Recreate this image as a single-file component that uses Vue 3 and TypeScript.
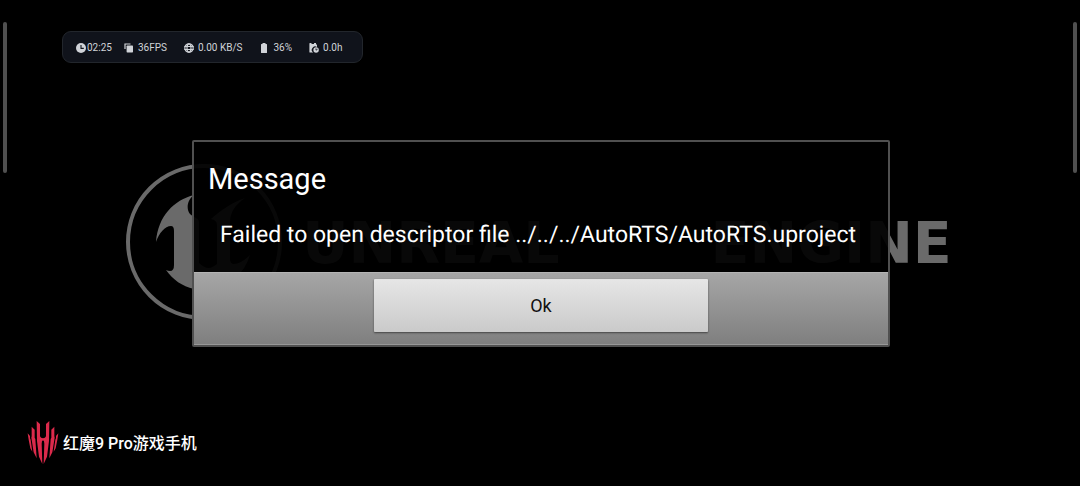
<script setup lang="ts">
import { ref } from 'vue'

type StatIcon = 'clock' | 'frames' | 'globe' | 'battery' | 'usage'

interface Stat {
  icon: StatIcon
  value: string
}

const stats: Stat[] = [
  { icon: 'clock', value: '02:25' },
  { icon: 'frames', value: '36FPS' },
  { icon: 'globe', value: '0.00 KB/S' },
  { icon: 'battery', value: '36%' },
  { icon: 'usage', value: '0.0h' },
]

const open = ref(true)
</script>

<template>
  <main class="screen">
    <div class="splash">
      <svg class="emblem" viewBox="0 0 156 156" aria-hidden="true">
        <circle cx="78" cy="78" r="76" fill="none" stroke="currentColor" stroke-width="4" />
        <path
          fill="currentColor"
          d="M68 31C48 36 32 52 30 78C33 69 39 62 45 62Q48 62 48 67V101Q48 107 44 107Q42 107 40 106C47 116 56 122 68 125L78 118L86 126C104 122 118 110 124 91C118 97 112 100 108 100Q104 100 104 95V58C104 48 110 40 119 34C107 38 95 46 85 55Q91 56 91 61V100Q86 104 83 104Q78 104 73 99V58C73 54 68 54 64 50C60 45 61 36 68 31Z"
        />
      </svg>
      <div class="wordmark"><span>UNREAL</span> <span>ENGINE</span></div>
    </div>

    <section v-if="open" class="dialog" role="alertdialog" aria-labelledby="dialog-title" aria-describedby="dialog-text">
      <div class="dialog-body">
        <h1 id="dialog-title">Message</h1>
        <p id="dialog-text">Failed to open descriptor file ../../../AutoRTS/AutoRTS.uproject</p>
      </div>
      <div class="dialog-actions">
        <button type="button" @click="open = false">Ok</button>
      </div>
    </section>

    <ul class="stats">
      <li v-for="stat in stats" :key="stat.icon" :class="stat.icon">
        <svg v-if="stat.icon === 'clock'" viewBox="0 0 10 10" aria-hidden="true">
          <circle cx="5" cy="5" r="5" fill="currentColor" />
          <path d="M5 2V5.4H7.8" fill="none" stroke="#10131b" stroke-width="1.1" />
        </svg>
        <svg v-else-if="stat.icon === 'frames'" viewBox="0 0 10 10" aria-hidden="true">
          <path d="M1 6V1H6.500" fill="none" stroke="currentColor" stroke-width="1.2" />
          <rect x="2.600" y="2.600" width="6.400" height="6.800" rx=".7" fill="currentColor" />
        </svg>
        <svg v-else-if="stat.icon === 'globe'" viewBox="0 0 10 10" aria-hidden="true">
          <g fill="none" stroke="currentColor" stroke-width="1.2">
            <circle cx="5" cy="5" r="4.2" />
            <ellipse cx="5" cy="5" rx="2" ry="4.2" />
            <path d="M.3 3.5H9.7M.3 6.5H9.7" />
          </g>
        </svg>
        <svg v-else-if="stat.icon === 'battery'" viewBox="0 0 10 10" aria-hidden="true">
          <path d="M3.5 0H6.5V1H7.5Q8 1 8 1.6V9.4Q8 10 7.4 10H2.6Q2 10 2 9.4V1.6Q2 1 2.5 1H3.5Z" fill="currentColor" />
        </svg>
        <svg v-else viewBox="0 0 10 10" aria-hidden="true">
          <path d="M1 0H2.5V1H5V0H7V1L8 2V4.100A3 3 0 0 0 4.2 9.5H1Q.4 9.5 .4 9V.6Q.4 0 1 0Z" fill="currentColor" />
          <circle cx="7.1" cy="7" r="2.7" fill="currentColor" />
          <path d="M7 5.4V7.2L8.6 6.2" fill="none" stroke="#10131b" stroke-width=".8" />
        </svg>
        <span>{{ stat.value }}</span>
      </li>
    </ul>

    <i class="edge edge-left"></i>
    <i class="edge edge-right"></i>

    <div class="brand">
      <svg viewBox="0 0 92 129" fill="currentColor" aria-hidden="true">
        <g id="claw-half">
          <path d="M27 0L37 9V46Q39 52 46 52V58Q42 59 42 68L44 129L34 107L28 60Z" />
          <path d="M12 17L21 26V50L23 54L27 112L18 94L11 50L12 46Z" />
          <path d="M0 37L7 45V52L9 56L14 92L8 82L3 56Z" />
        </g>
        <use href="#claw-half" transform="translate(92 0) scale(-1 1)" />
      </svg>
      <span>红魔9 Pro游戏手机</span>
    </div>
  </main>
</template>

<style>
body {
  margin: 0;
  background: #000;
}
</style>

<style scoped>
.screen {
  position: relative;
  display: grid;
  place-items: center;
  min-height: 100vh;
  overflow: hidden;
  background: #000;
  color: #fff;
  font-family: Roboto, "Noto Sans CJK SC", sans-serif;
}

.splash,
.dialog {
  grid-area: 1 / 1;
}

.splash {
  display: flex;
  align-items: center;
  gap: 20px;
  box-sizing: border-box;
  width: 77%;
  margin: 0 4px 2px 0;
  padding: 0 2px 0 4px;
  color: #6a6a6a;
}

.emblem {
  flex: none;
  width: 156px;
  height: 156px;
}

.wordmark {
  display: flex;
  flex: 1;
  justify-content: space-between;
  padding-top: 2px;
  font: bold 57px/56px "DejaVu Sans", sans-serif;
}

.dialog {
  position: relative;
  margin-left: 2px;
  border: 2px solid #505050;
  border-radius: 2px;
  background: linear-gradient(rgba(0, 0, 0, 0.92), rgba(0, 0, 0, 0.92)) padding-box;
}

.dialog-body {
  padding: 19px 20px 21px 14px;
}

h1 {
  margin: 0;
  font-size: 29px;
  line-height: 36px;
  font-weight: 400;
}

p {
  margin: 22px 0 0;
  padding: 0 12px;
  font-size: 23px;
  line-height: 32px;
  text-rendering: geometricPrecision;
}

.dialog-actions {
  display: flex;
  justify-content: center;
  padding: 6px 0 12px;
  border-top: 1px solid #b4b4b4;
  border-bottom: 1px solid #989898;
  background: linear-gradient(#a6a6a6, #7f7f7f);
}

button {
  width: 48%;
  height: 53px;
  padding: 1px 0 0;
  border: 0;
  border-radius: 1px;
  background: linear-gradient(#e6e6e6, #cacaca);
  box-shadow: 0 1px 2px #444;
  color: #111;
  font: 18px/24px Roboto, sans-serif;
}

.stats {
  position: absolute;
  top: 31px;
  left: 62px;
  display: flex;
  align-items: center;
  gap: 17px;
  height: 30px;
  margin: 0;
  padding: 0 20px 0 13px;
  border: 1px solid #22262c;
  border-radius: 9px;
  background: #10131b;
  color: #d0d3d8;
  font-size: 10px;
  line-height: 16px;
  list-style: none;
}

.stats li {
  display: flex;
  align-items: center;
  gap: 4px;
  padding-top: 1px;
}

.stats .clock {
  gap: 1px;
  margin-right: -5px;
}

.stats svg {
  width: 10px;
  height: 10px;
}

.edge {
  position: absolute;
  top: 22px;
  width: 4px;
  height: 151px;
  border-radius: 2px;
  background: #505050;
}

.edge-left {
  left: 3px;
}

.edge-right {
  right: 3px;
}

.brand {
  position: absolute;
  bottom: 22px;
  left: 27px;
  display: flex;
  align-items: center;
  gap: 4px;
  font-size: 16px;
  line-height: 24px;
  font-weight: 500;
}

.brand span {
  padding-top: 2px;
}

.brand svg {
  width: 32px;
  height: 43px;
  color: #dc2a4b;
}
</style>
